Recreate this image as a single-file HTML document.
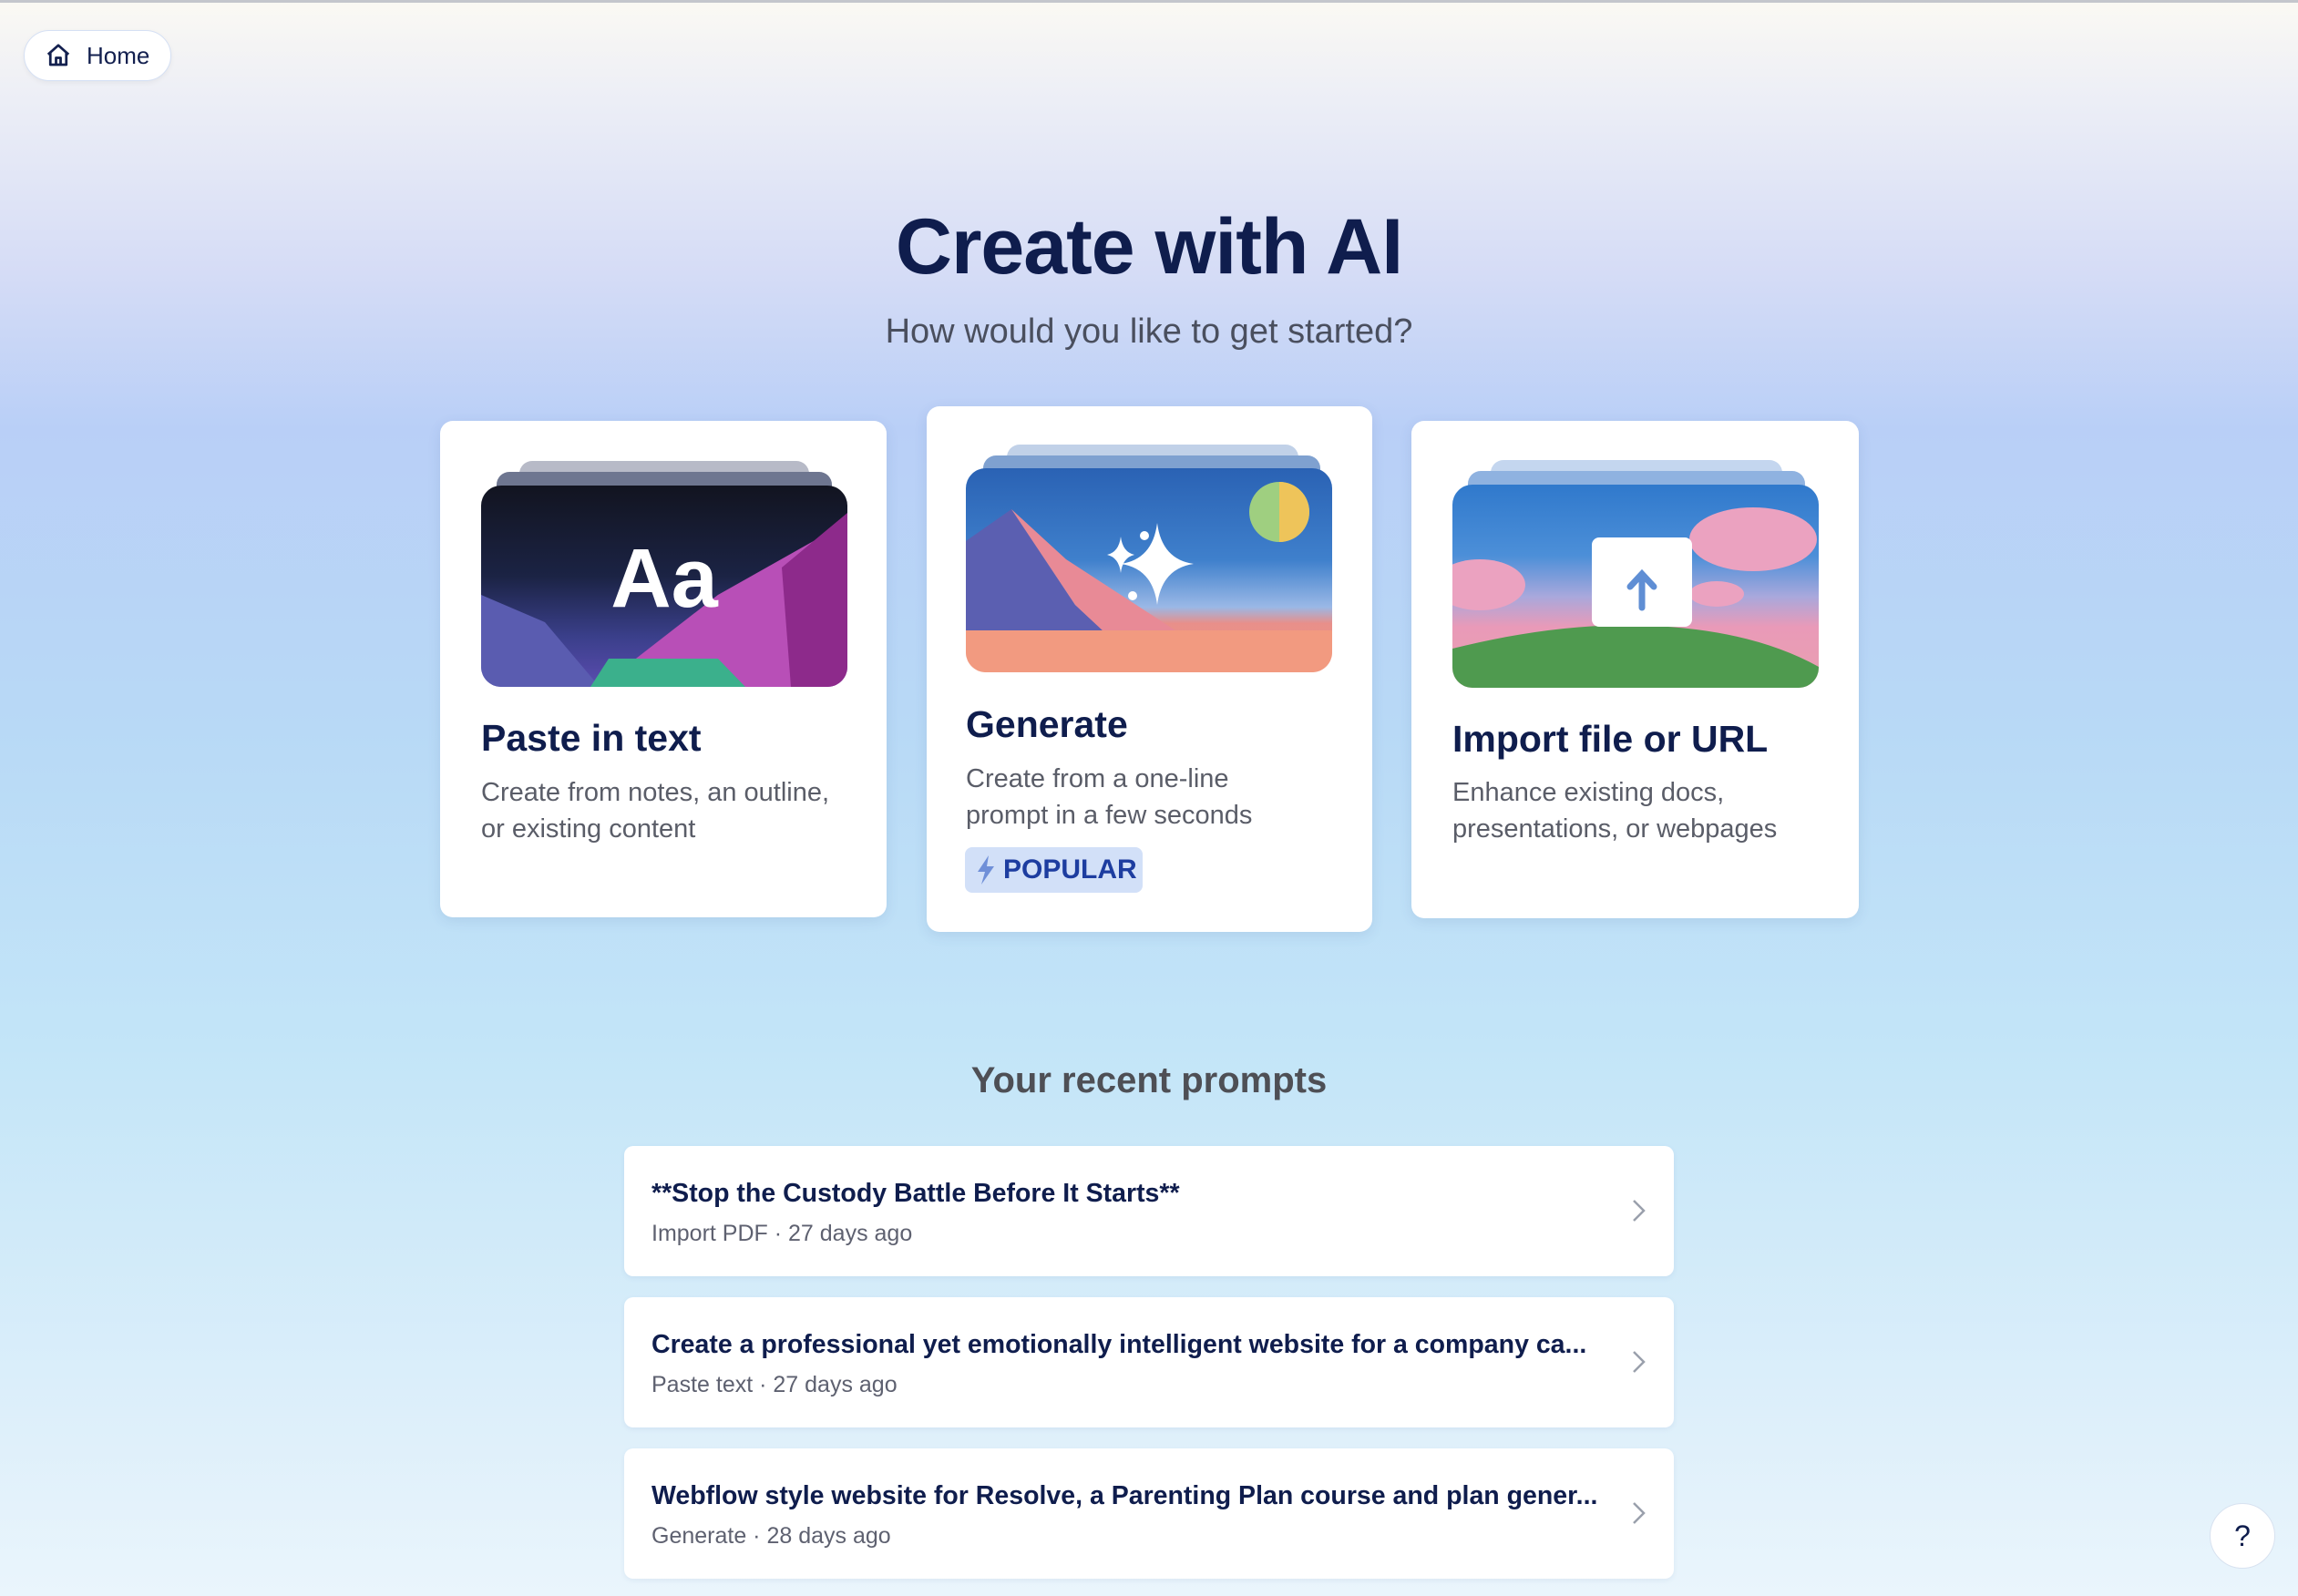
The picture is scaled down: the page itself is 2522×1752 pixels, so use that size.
<!DOCTYPE html>
<html><head><meta charset="utf-8"><style>
*{box-sizing:border-box;margin:0;padding:0}
body{width:2522px;height:1752px;overflow:hidden;font-family:"Liberation Sans",sans-serif;
background:linear-gradient(180deg,#fbf9f3 0px,#eceef6 110px,#d5dcf6 300px,#b9cff7 470px,#b8d9f6 800px,#c3e5f8 1150px,#ddeffa 1550px,#eaf5fc 1752px);position:relative;color:#0f1d4d}
.topline{position:absolute;left:0;top:0;width:100%;height:3px;background:#c4c6cc}
.home{position:absolute;left:26px;top:33px;width:162px;height:56px;border-radius:28px;background:#fff;border:1.5px solid #d5e0f4;box-shadow:0 2px 6px rgba(0,0,0,.05);font-size:26px;display:flex;align-items:center;padding-left:22px;gap:16px;color:#13204f}
h1{position:absolute;top:222px;width:100%;text-align:center;font-size:86px;font-weight:bold;color:#0f1d4d;letter-spacing:-1px}
.sub{position:absolute;top:343px;width:100%;text-align:center;font-size:38px;color:#4a4f5e}
.card{position:absolute;background:#fff;border-radius:14px;box-shadow:0 4px 14px rgba(60,90,150,.12)}
.img{position:absolute;left:45px;width:402px;height:221px;border-radius:22px;overflow:hidden}
.l1,.l2{position:absolute;border-radius:14px 14px 0 0}
.ct{position:absolute;left:45px;font-size:41px;font-weight:bold;color:#0f1d4d}
.cd{position:absolute;left:45px;font-size:29px;line-height:40px;color:#5a5d68}
.rt{position:absolute;top:1164px;width:100%;text-align:center;font-size:40px;font-weight:bold;color:#4e4f55}
.row{position:absolute;left:685px;width:1152px;height:143px;background:#fff;border-radius:10px;box-shadow:0 2px 6px rgba(60,90,150,.08)}
.row .t{position:absolute;left:30px;top:36px;font-size:28.5px;font-weight:bold;color:#0f1d4d}
.row .s{position:absolute;left:30px;top:82px;font-size:25px;color:#5e6170}
.row svg{position:absolute;right:28px;top:56px}
.help{position:absolute;left:2425px;top:1650px;width:72px;height:72px;border-radius:50%;background:#fff;border:1.5px solid #d8e2f0;font-size:32px;text-align:center;line-height:70px;color:#0f1d4d}
</style></head><body>
<div class="topline"></div>
<div class="home"><svg width="30" height="30" viewBox="0 0 24 24" fill="none" stroke="#13204f" stroke-width="2.2" stroke-linejoin="round"><path d="M3 11L12 3l9 8M5 9.5V20h14V9.5M10 20v-6h4v6"/></svg>Home</div>
<h1>Create with AI</h1>
<div class="sub">How would you like to get started?</div>

<div class="card" style="left:483px;top:462px;width:490px;height:545px">
 <div class="l1" style="left:87px;top:44px;width:318px;height:30px;background:#b7bac7"></div>
 <div class="l2" style="left:62px;top:56px;width:368px;height:30px;background:#6e7690"></div>
 <div class="img" style="top:71px;background:linear-gradient(180deg,#121420 0%,#1b2344 45%,#3a3f8a 75%,#5b4cb0 100%)">
  <svg width="402" height="221" style="position:absolute;left:0;top:0"><polygon points="0,120 70,150 130,221 0,221" fill="#5a5cb0"/><polygon points="130,221 260,120 402,40 402,221" fill="#b84fb7"/><polygon points="330,90 402,30 402,221 340,221" fill="#8d2a8b"/><polygon points="140,190 260,190 290,221 120,221" fill="#3bb08c"/></svg>
  <div style="position:absolute;left:0;width:100%;top:50px;text-align:center;font-size:92px;font-weight:bold;color:#fff">Aa</div>
 </div>
 <div class="ct" style="top:325px">Paste in text</div>
 <div class="cd" style="top:388px">Create from notes, an outline,<br>or existing content</div>
</div>

<div class="card" style="left:1017px;top:446px;width:489px;height:577px">
 <div class="l1" style="left:88px;top:42px;width:320px;height:30px;background:#c1d1e8"></div>
 <div class="l2" style="left:62px;top:54px;width:370px;height:30px;background:#7fa1d0"></div>
 <div class="img" style="left:43px;top:68px;height:224px;background:linear-gradient(180deg,#2a62b4 0%,#3f80cc 45%,#9ab8e6 68%,#e88f8a 76%,#f09a80 100%)">
  <svg width="402" height="224" style="position:absolute;left:0;top:0"><polygon points="0,80 50,45 120,150 150,178 0,178" fill="#5b5fb1"/><polygon points="50,45 120,150 150,178 230,178 110,100" fill="#e88a96"/><polygon points="0,178 402,178 402,224 0,224" fill="#f29a80"/><circle cx="344" cy="48" r="33" fill="#9fcf80"/><path d="M344 15a33 33 0 0 1 0 66z" fill="#eec45a"/>
  <path d="M210 60 Q215 100 250 105 Q215 110 210 150 Q205 110 170 105 Q205 100 210 60z" fill="#fff"/><path d="M170 75 Q172 92 185 95 Q172 98 170 115 Q168 98 155 95 Q168 92 170 75z" fill="#fff"/><circle cx="196" cy="74" r="5" fill="#fff"/><circle cx="183" cy="140" r="5" fill="#fff"/></svg>
 </div>
 <div class="ct" style="left:43px;top:326px">Generate</div>
 <div class="cd" style="left:43px;top:389px">Create from a one-line<br>prompt in a few seconds</div>
 <div style="position:absolute;left:42px;top:484px;width:195px;height:50px;border-radius:8px;background:#d2e0f8;font-size:30px;font-weight:bold;color:#1d3da0;line-height:50px;padding-left:42px"><svg width="22" height="32" viewBox="0 0 22 32" style="position:absolute;left:12px;top:9px"><path d="M14 0L2 18h8L6 32 20 12h-8z" fill="#6f8fd8"/></svg>POPULAR</div>
</div>

<div class="card" style="left:1549px;top:462px;width:491px;height:546px">
 <div class="l1" style="left:87px;top:43px;width:320px;height:30px;background:#c4d6ef"></div>
 <div class="l2" style="left:62px;top:55px;width:370px;height:30px;background:#8fb2e0"></div>
 <div class="img" style="top:70px;height:223px;background:linear-gradient(180deg,#3079cc 0%,#4c8fd8 35%,#a8a8dc 55%,#e99ab8 70%,#e9a0b0 100%)">
  <svg width="402" height="223" style="position:absolute;left:0;top:0"><path d="M0 180 Q120 150 220 155 Q330 160 402 200 V223 H0z" fill="#4f9a4f"/><ellipse cx="330" cy="60" rx="70" ry="35" fill="#eba2c0"/><ellipse cx="30" cy="110" rx="50" ry="28" fill="#eba2c0"/><ellipse cx="290" cy="120" rx="30" ry="14" fill="#eba2c0"/></svg>
  <div style="position:absolute;left:153px;top:58px;width:110px;height:98px;background:#fff;border-radius:8px"></div>
  <svg width="50" height="60" style="position:absolute;left:183px;top:90px"><path d="M25 45V10M12 22L25 8 38 22" stroke="#5f8ed4" stroke-width="7" fill="none" stroke-linecap="round"/></svg>
 </div>
 <div class="ct" style="top:326px">Import file or URL</div>
 <div class="cd" style="top:388px">Enhance existing docs,<br>presentations, or webpages</div>
</div>

<div class="rt">Your recent prompts</div>
<div class="row" style="top:1258px"><div class="t">**Stop the Custody Battle Before It Starts**</div><div class="s">Import PDF · 27 days ago</div><svg width="20" height="30"><path d="M4 4l11 11L4 26" stroke="#9aa0ac" stroke-width="2.5" fill="none"/></svg></div>
<div class="row" style="top:1424px"><div class="t">Create a professional yet emotionally intelligent website for a company ca...</div><div class="s">Paste text · 27 days ago</div><svg width="20" height="30"><path d="M4 4l11 11L4 26" stroke="#9aa0ac" stroke-width="2.5" fill="none"/></svg></div>
<div class="row" style="top:1590px"><div class="t">Webflow style website for Resolve, a Parenting Plan course and plan gener...</div><div class="s">Generate · 28 days ago</div><svg width="20" height="30"><path d="M4 4l11 11L4 26" stroke="#9aa0ac" stroke-width="2.5" fill="none"/></svg></div>
<div class="help">?</div>
</body></html>
